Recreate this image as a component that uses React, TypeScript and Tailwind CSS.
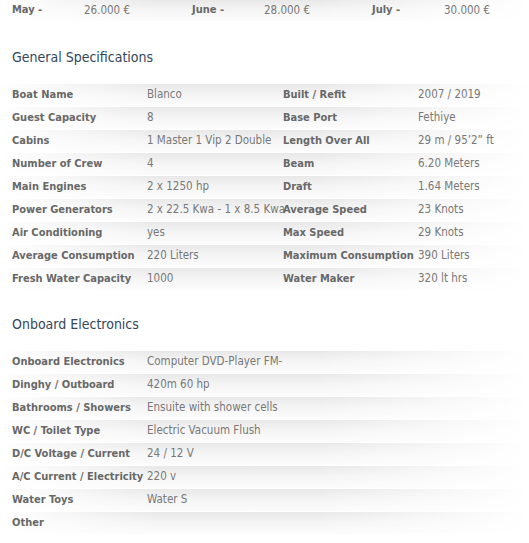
const prices = [
  { month: "May -", price: "26.000 €" },
  { month: "June -", price: "28.000 €" },
  { month: "July -", price: "30.000 €" },
];

const general: [string, string, string, string][] = [
  ["Boat Name", "Blanco", "Built / Refit", "2007 / 2019"],
  ["Guest Capacity", "8", "Base Port", "Fethiye"],
  ["Cabins", "1 Master 1 Vip 2 Double", "Length Over All", "29 m / 95’2” ft"],
  ["Number of Crew", "4", "Beam", "6.20 Meters"],
  ["Main Engines", "2 x 1250 hp", "Draft", "1.64 Meters"],
  ["Power Generators", "2 x 22.5 Kwa - 1 x 8.5 Kwa", "Average Speed", "23 Knots"],
  ["Air Conditioning", "yes", "Max Speed", "29 Knots"],
  ["Average Consumption", "220 Liters", "Maximum Consumption", "390 Liters"],
  ["Fresh Water Capacity", "1000", "Water Maker", "320 lt hrs"],
];

const electronics: [string, string][] = [
  ["Onboard Electronics", "Computer DVD-Player FM-"],
  ["Dinghy / Outboard", "420m 60 hp"],
  ["Bathrooms / Showers", "Ensuite with shower cells"],
  ["WC / Toilet Type", "Electric Vacuum Flush"],
  ["D/C Voltage / Current", "24 / 12 V"],
  ["A/C Current / Electricity", "220 v"],
  ["Water Toys", "Water S"],
  ["Other", ""],
];

// row shading: grey at the top, fading down and out to the sides
const rowBg =
  "bg-[linear-gradient(to_right,#fff,rgba(255,255,255,0)_30%,rgba(255,255,255,0)_60%,#fff),linear-gradient(to_bottom,#e8e8e8,#f4f4f4_45%,#fcfcfc)]";

function App() {
  return (
    <div className="w-[529px] h-[543px] bg-white overflow-hidden font-['DejaVu_Sans_Condensed','DejaVu_Sans',sans-serif] text-[11.5px]">
      <div className={`flex h-[21px] items-center pl-3 ${rowBg}`}>
        {prices.map((p) => (
          <div key={p.month} className="flex w-[180px] shrink-0">
            <span className="w-[72px] font-bold text-[11px] text-[#686868]">{p.month}</span>
            <span className="text-[#787878]">{p.price}</span>
          </div>
        ))}
      </div>

      <h2 className="pl-3 pt-[26px] pb-[16px] text-[14px] leading-[20px] text-[#34465a]">
        General Specifications
      </h2>

      <div className="flex flex-col">
        {general.map((r) => (
          <div
            key={r[0]}
            className={`grid grid-cols-[135px_136px_135px_1fr] h-[23px] items-center pl-3 border-t border-white ${rowBg}`}
          >
            <span className="font-bold text-[11px] text-[#686868] whitespace-nowrap">{r[0]}</span>
            <span className="text-[#787878] whitespace-nowrap">{r[1]}</span>
            <span className="font-bold text-[11px] text-[#686868] whitespace-nowrap">{r[2]}</span>
            <span className="text-[#787878] whitespace-nowrap">{r[3]}</span>
          </div>
        ))}
      </div>

      <h2 className="pl-3 pt-[24px] pb-[16px] text-[14px] leading-[20px] text-[#34465a]">
        Onboard Electronics
      </h2>

      <div className="flex flex-col">
        {electronics.map((r) => (
          <div
            key={r[0]}
            className={`grid grid-cols-[135px_1fr] h-[23px] items-center pl-3 border-t border-white ${rowBg}`}
          >
            <span className="font-bold text-[11px] text-[#686868] whitespace-nowrap">{r[0]}</span>
            <span className="text-[#787878] whitespace-nowrap">{r[1]}</span>
          </div>
        ))}
      </div>
    </div>
  );
}

export default App;
